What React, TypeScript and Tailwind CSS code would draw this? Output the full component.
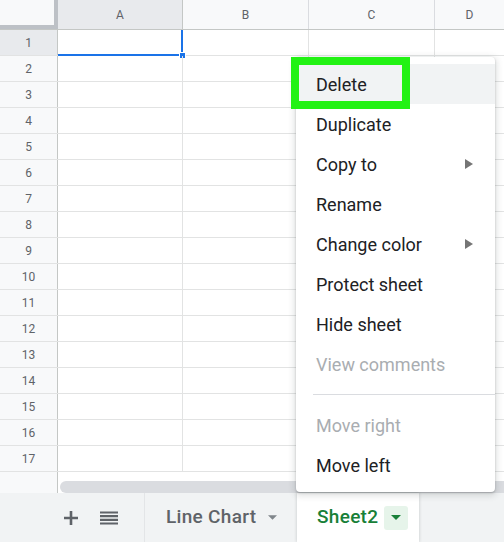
import React from 'react';

const rows = Array.from({ length: 17 }, (_, i) => i + 1);

type Item = { label: string; disabled?: boolean; submenu?: boolean; active?: boolean };

const menuTop: Item[] = [
  { label: 'Delete', active: true },
  { label: 'Duplicate' },
  { label: 'Copy to', submenu: true },
  { label: 'Rename' },
  { label: 'Change color', submenu: true },
  { label: 'Protect sheet' },
  { label: 'Hide sheet' },
  { label: 'View comments', disabled: true },
];

const menuBottom: Item[] = [{ label: 'Move right', disabled: true }, { label: 'Move left' }];

function Caret({ className }: { className?: string }) {
  return (
    <svg viewBox="0 0 10 5" className={className} fill="currentColor">
      <path d="M0 0h10L5 5z" />
    </svg>
  );
}

function MenuRow({ item }: { item: Item }) {
  return (
    <div
      className={`flex h-[40px] items-center justify-between pl-[20px] pr-[22px] text-[18px] ${
        item.active ? 'bg-[#f1f3f4]' : ''
      } ${item.disabled ? 'text-[#a9adb1]' : 'text-[#202124]'}`}
    >
      <span>{item.label}</span>
      {item.submenu && (
        <svg viewBox="0 0 8 10" className="h-[10px] w-[8px] text-[#757575]" fill="currentColor">
          <path d="M0 0l8 5-8 5z" />
        </svg>
      )}
    </div>
  );
}

export default function App() {
  return (
    <div className="relative h-[542px] w-[504px] overflow-hidden bg-white font-['Roboto',sans-serif]">
      {/* column headers */}
      <div className="flex h-[30px] border-b border-[#c4c7c5] text-[12px] text-[#5f6368]">
        <div className="w-[58px] shrink-0 border-b-4 border-r-4 border-[#bdc1c6] bg-[#f8f9fa]" />
        <div className="flex w-[125px] shrink-0 items-center justify-center border-r border-[#c4c7c5] bg-[#e8eaed]">A</div>
        <div className="flex w-[126px] shrink-0 items-center justify-center border-r border-[#dadce0] bg-[#f8f9fa]">B</div>
        <div className="flex w-[126px] shrink-0 items-center justify-center border-r border-[#dadce0] bg-[#f8f9fa]">C</div>
        <div className="flex flex-1 items-center justify-center bg-[#f8f9fa]">D</div>
      </div>

      {/* rows */}
      {rows.map((r) => (
        <div key={r} className="flex h-[26px] border-b border-[#e2e3e3]">
          <div
            className={`flex w-[58px] shrink-0 items-center justify-center border-r border-[#c4c7c5] text-[12px] text-[#5f6368] ${
              r === 1 ? 'bg-[#e8eaed]' : 'bg-[#f8f9fa]'
            }`}
          >
            {r}
          </div>
          <div className="relative w-[125px] shrink-0 border-r border-[#e2e3e3]">
            {r === 1 && (
              <>
                <div className="absolute -right-px bottom-[-1px] left-0 h-[2px] bg-[#1a73e8]" />
                <div className="absolute -right-px top-0 bottom-0 w-[2px] bg-[#1a73e8]" />
                <div className="absolute -bottom-[4px] -right-[4px] h-[7px] w-[7px] border border-white bg-[#1a73e8]" />
              </>
            )}
          </div>
          <div className="w-[126px] shrink-0 border-r border-[#e2e3e3]" />
          <div className="w-[126px] shrink-0 border-r border-[#e2e3e3]" />
          <div className="flex-1" />
        </div>
      ))}

      {/* scrollbar strip */}
      <div className="flex h-[21px]">
        <div className="w-[58px] shrink-0 border-r border-[#c4c7c5] bg-[#f8f9fa]" />
        <div className="flex flex-1 items-end pl-[2px]">
          <div className="h-[12px] w-full rounded-l-full bg-[#dadce0]" />
        </div>
      </div>

      {/* sheet tabs */}
      <div className="flex h-[49px] items-stretch bg-[#f1f3f4] text-[19px] font-medium">
        <div className="flex w-[145px] shrink-0 items-center border-r border-[#e3e5e7] pl-[64px]">
          <svg viewBox="0 0 14 14" className="h-[14px] w-[14px] text-[#5f6368]">
            <path d="M7 0v14M0 7h14" stroke="currentColor" strokeWidth="2.6" />
          </svg>
          <svg viewBox="0 0 18 14" className="ml-[22px] h-[14px] w-[18px] text-[#5f6368]">
            <path d="M0 1.5h18M0 5.2h18M0 8.8h18M0 12.5h18" stroke="currentColor" strokeWidth="2.2" />
          </svg>
        </div>
        <div className="flex w-[152px] shrink-0 items-center pl-[21px] text-[#5f6368]">
          <span className="tracking-[0.3px]">Line Chart</span>
          <Caret className="ml-[12px] h-[5px] w-[9px] text-[#80868b]" />
        </div>
        <div className="flex w-[122px] shrink-0 items-center bg-white pl-[20px] text-[#188038] shadow-[0_0_3px_rgba(60,64,67,0.25)]">
          <span className="tracking-[0.3px]">Sheet2</span>
          <div className="ml-[6px] flex h-[24px] w-[24px] items-center justify-center rounded-[3px] bg-[#e6f4ea]">
            <Caret className="h-[5px] w-[10px] text-[#188038]" />
          </div>
        </div>
        <div className="flex-1" />
      </div>

      {/* context menu */}
      <div className="absolute left-[296px] top-[57px] w-[199px] rounded-[4px] bg-white py-[7px] shadow-[0_2px_6px_2px_rgba(60,64,67,0.15),0_1px_2px_rgba(60,64,67,0.3)]">
        {menuTop.map((it) => (
          <MenuRow key={it.label} item={it} />
        ))}
        <div className="flex h-[21px] items-center pl-[17px]">
          <div className="h-px w-full bg-[#dadce0]" />
        </div>
        {menuBottom.map((it) => (
          <MenuRow key={it.label} item={it} />
        ))}
      </div>

      {/* highlight annotation */}
      <div className="absolute left-[291px] top-[57px] h-[52px] w-[119px] border-[8px] border-[#22f214]" />
    </div>
  );
}
